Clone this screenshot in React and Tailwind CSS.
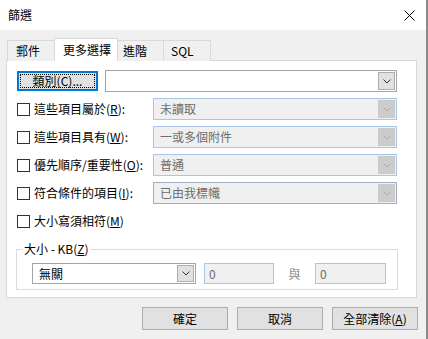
import React from 'react';

const font = "font-['Noto_Sans_CJK_TC','Noto_Sans',sans-serif]";

function Chevron({ color = '#333' }) {
  return (
    <svg width="8" height="5" viewBox="0 0 8 5" fill="none">
      <polyline points="0.5,0.5 4,4 7.5,0.5" stroke={color} strokeWidth="1" />
    </svg>
  );
}

// Windows-style combobox; disabled ones get the pale blue frame
function Combo({ value, width, disabled, muted, height = 'h-[22px]' }) {
  const frame = disabled
    ? muted
      ? 'border-[#a3adc2] bg-[#f0f0f0] text-[#6d6d6d]'
      : 'border-[#a9c6e6] bg-[#f0f0f0] text-[#6d6d6d]'
    : 'border-[#a5a5a5] bg-white text-black';
  return (
    <div className={`${width} ${height} flex items-stretch border ${frame} p-px`}>
      <div className="flex flex-1 items-center pl-[5px] leading-none">{value}</div>
      <div
        className={`flex w-[17px] items-center justify-center border ${
          disabled ? 'border-[#cacaca] bg-[#cccccc]' : 'border-[#adadad] bg-[#e1e1e1]'
        }`}
      >
        <Chevron color={disabled ? '#a8a8a8' : '#333'} />
      </div>
    </div>
  );
}

function Check({ children }) {
  return (
    <div className="flex h-[22px] w-[136px] items-center">
      <span className="h-[13px] w-[13px] border border-[#333] bg-white" />
      <span className="ml-[4px] whitespace-nowrap leading-none">{children}</span>
    </div>
  );
}

function Btn({ children }) {
  return (
    <button className="flex h-[23px] w-[86px] items-center justify-center border border-[#adadad] bg-[#e1e1e1] leading-none text-black">
      {children}
    </button>
  );
}

const tabs = [
  { label: '郵件', w: 'w-[48px]', pl: 'pl-[8px]' },
  { label: '更多選擇', w: 'w-[64px]', pl: 'pl-[8px]', active: true },
  { label: '進階', w: 'w-[47px]', pl: 'pl-[5px]' },
  { label: 'SQL', w: 'w-[48px]', pl: 'pl-[7px]' },
];

export default function App() {
  return (
    <div className={`flex h-[339px] w-[428px] bg-[#f0f0f0] text-[12px] text-black ${font}`}>
      <div className="flex w-[426px] flex-col">
        {/* title bar */}
        <div className="flex h-[30px] items-center justify-between bg-white pl-[8px] pr-[11px]">
          <span className="leading-none">篩選</span>
          <svg width="11" height="11" viewBox="0 0 11 11">
            <path d="M0.5 0.5 L10.5 10.5 M10.5 0.5 L0.5 10.5" stroke="#000" strokeWidth="1" />
          </svg>
        </div>

        {/* tab strip */}
        <div className="relative z-10 -mb-px ml-[7px] mt-[8px] flex h-[23px] items-end">
          {tabs.map((t) => (
            <div
              key={t.label}
              className={`-ml-px flex items-center border-x border-t border-[#d9d9d9] leading-none first:ml-0 ${t.w} ${t.pl} ${
                t.active ? 'relative z-10 h-[23px] bg-white' : 'h-[21px] bg-[#f0f0f0]'
              }`}
            >
              {t.label}
            </div>
          ))}
        </div>

        {/* tab panel */}
        <div className="ml-[6px] h-[238px] w-[411px] border border-[#d9d9d9] bg-white pl-[10px] pt-[9px]">
          <div className="flex h-[22px] items-center">
            <button className="flex h-[20px] w-[81px] items-stretch border-2 border-[#0078d7] bg-[#e1e1e1] p-px">
              <span className="flex flex-1 items-center justify-center border border-dotted border-black leading-none">
                類別(C)...
              </span>
            </button>
            <div className="ml-[7px]">
              <Combo value="" width="w-[292px]" />
            </div>
          </div>

          <div className="mt-[6px] flex items-center">
            <Check>這些項目屬於(<u>R</u>):</Check>
            <Combo value="未讀取" width="w-[244px]" disabled />
          </div>
          <div className="mt-[6px] flex items-center">
            <Check>這些項目具有(<u>W</u>):</Check>
            <Combo value="一或多個附件" width="w-[244px]" disabled />
          </div>
          <div className="mt-[6px] flex items-center">
            <Check>優先順序/重要性(<u>O</u>):</Check>
            <Combo value="普通" width="w-[244px]" disabled />
          </div>
          <div className="mt-[6px] flex items-center">
            <Check>符合條件的項目(<u>I</u>):</Check>
            <Combo value="已由我標幟" width="w-[244px]" disabled muted />
          </div>
          <div className="mt-[6px] flex items-center">
            <Check>大小寫須相符(<u>M</u>)</Check>
          </div>

          <fieldset className="-ml-px mt-[9px] w-[382px] border border-[#dcdcdc] pb-[5px]">
            <legend className="ml-[5px] px-[2px] leading-[16px]">
              大小 - KB(<u>Z</u>)
            </legend>
            <div className="flex items-center pl-[15px] pt-[6px]">
              <Combo value="無關" width="w-[164px]" height="h-[21px]" />
              <div className="ml-[8px] flex h-[21px] w-[70px] items-center border border-[#a9c6e6] bg-[#f0f0f0] pl-[4px] leading-none text-[#6d6d6d]">
                0
              </div>
              <span className="w-[41px] text-center leading-none text-[#8a8a8a]">與</span>
              <div className="flex h-[21px] w-[71px] items-center border border-[#a9c6e6] bg-[#f0f0f0] pl-[4px] leading-none text-[#6d6d6d]">
                0
              </div>
            </div>
          </fieldset>
        </div>

        {/* dialog buttons */}
        <div className="mt-[9px] flex justify-end gap-[9px] pr-[8px]">
          <Btn>確定</Btn>
          <Btn>取消</Btn>
          <Btn>全部清除(<u>A</u>)</Btn>
        </div>
      </div>
      <div className="w-[2px] bg-[#8a8a8a]" />
    </div>
  );
}
